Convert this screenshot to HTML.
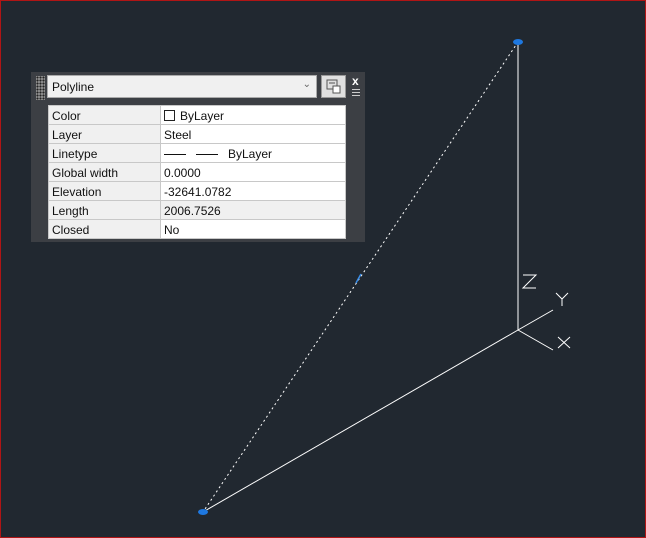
<!DOCTYPE html>
<html><head><style>
body{margin:0;width:646px;height:538px;background:#212830;overflow:hidden;position:relative;font-family:"Liberation Sans",sans-serif;font-size:12px}
#frame{position:absolute;left:0;top:0;width:644px;height:536px;border:1px solid #b01515}
#panel{position:absolute;left:31px;top:72px;width:334px;height:170px;background:#3c3f44}
#grip{position:absolute;left:36px;top:76px;width:9px;height:24px;background:#888;background-image:radial-gradient(#222 40%,transparent 45%);background-size:3px 3px}
#dd{position:absolute;left:47px;top:75px;width:270px;height:23px;background:#f0f0f0;border:1px solid #aaa;box-sizing:border-box;padding:4px 4px;color:#111}
#dd span{position:absolute;right:5px;top:3px;color:#666;font-size:10px}
#btn{position:absolute;left:321px;top:75px;width:25px;height:23px;background:#e0e0e0;border:1px solid #999;box-sizing:border-box}
table{position:absolute;left:48px;top:105px;width:298px;border-collapse:collapse;background:#fff}
td{border:1px solid #c8c8c8;height:18px;line-height:14px;padding:2px 3px 0;box-sizing:border-box;color:#111;white-space:nowrap;overflow:hidden}
tr{height:19px}
td:first-child{width:112px;background:#f0f0f0}
tr.g td:last-child{background:#f0f0f0}
</style></head><body>
<div id="frame"></div>
<svg width="646" height="538" style="position:absolute;left:0;top:0">
<line x1="518" y1="42" x2="203" y2="512" stroke="#fff" stroke-width="1" stroke-dasharray="2,3"/>
<line x1="518" y1="42" x2="518" y2="330" stroke="#fff"/>
<line x1="518" y1="330" x2="203" y2="512" stroke="#fff"/>
<line x1="518" y1="330" x2="553" y2="310" stroke="#fff"/>
<line x1="518" y1="330" x2="553" y2="350" stroke="#fff"/>
<path d="M523 275H536L523 288H536" stroke="#fff" fill="none"/>
<path d="M556 293L562 299L568 293M562 299V306" stroke="#fff" fill="none"/>
<path d="M558 337L570 348M570 337L558 348" stroke="#fff" fill="none"/>
<line x1="356" y1="283" x2="361" y2="274" stroke="#3a8ee8" stroke-width="1.5"/>
<ellipse cx="518" cy="42" rx="5" ry="3" fill="#1e78e0"/>
<ellipse cx="203" cy="512" rx="5" ry="3" fill="#1e78e0"/>
</svg>
<div id="panel"></div>
<div id="grip"></div>
<div id="dd">Polyline<span>&#8964;</span></div>
<div id="btn"><svg width="23" height="21"><rect x="5" y="4" width="10" height="9" fill="none" stroke="#555"/><line x1="7" y1="7" x2="13" y2="7" stroke="#555"/><rect x="11" y="10" width="7" height="7" fill="#fff" stroke="#555"/></svg></div>
<div style="position:absolute;left:352px;top:74px;color:#fff;font-weight:bold;font-size:12px">x</div>
<div style="position:absolute;left:352px;top:89px;width:8px;height:1px;background:#ccc;box-shadow:0 3px #ccc,0 6px #ccc"></div>
<table>
<tr><td>Color</td><td><span style="display:inline-block;width:9px;height:9px;border:1px solid #222;vertical-align:-1px;margin-right:5px"></span>ByLayer</td></tr>
<tr><td>Layer</td><td>Steel</td></tr>
<tr><td>Linetype</td><td><span style="display:inline-block;width:22px;border-top:1px solid #111;vertical-align:3px;margin-right:10px"></span><span style="display:inline-block;width:22px;border-top:1px solid #111;vertical-align:3px;margin-right:10px"></span>ByLayer</td></tr>
<tr><td>Global width</td><td>0.0000</td></tr>
<tr><td>Elevation</td><td>-32641.0782</td></tr>
<tr class="g"><td>Length</td><td>2006.7526</td></tr>
<tr><td>Closed</td><td>No</td></tr>
</table>
</body></html>
